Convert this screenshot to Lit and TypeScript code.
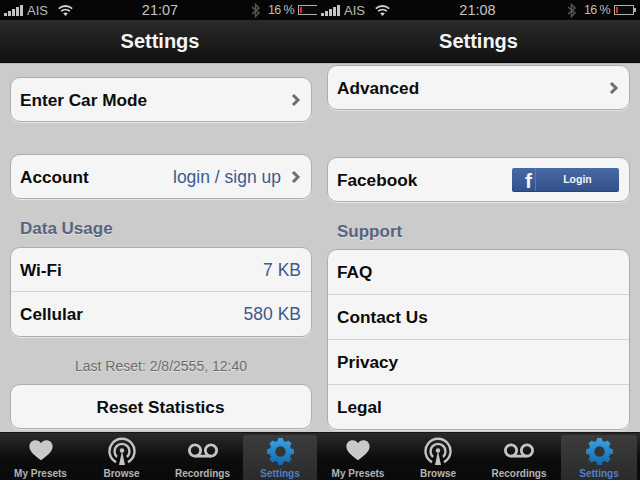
import { LitElement, html, css, svg } from "lit";
import { customElement, property } from "lit/decorators.js";

const chevron = html`<svg class="chev" width="10" height="14" viewBox="0 0 10 14"><path d="M2 2l5 5-5 5" fill="none" stroke="#6f6f6f" stroke-width="3"/></svg>`;

const heart = svg`<path d="M14 25C7 19 1.500 15 1.500 8.500 1.500 4 5 1.500 8 1.500c2.800 0 4.800 1.400 6 3.500 1.200-2.100 3.200-3.500 6-3.500 3 0 6.500 2.500 6.500 7 0 6.500-5.500 10.500-12.500 16.500z" fill="#c9c9c9"/>`;
const gearPath = "M11 0h6l1 4 3 1.300 3.600-2.100 4.200 4.200-2.100 3.600L28 14l4 1v6l-4 1-1.300 3 2.100 3.600-4.200 4.200-3.600-2.100L18 32l-1 4h-6l-1-4-3-1.300-3.600 2.100-4.200-4.200 2.100-3.600L0 22l-4-1v-6l4-1 1.300-3-2.100-3.600 4.200-4.200L7 5.300 10 4z";

@customElement("app-panel")
class AppPanel extends LitElement {
  @property() time = "";
  @property({ type: Boolean }) right = false;

  static styles = css`
    :host { display: flex; flex-direction: column; height: 480px; overflow: hidden; font-family: "Liberation Sans", Arial, sans-serif; }
    .status { height: 20px; flex: none; background: #060606; color: #bcbcbc; display: flex; align-items: center; font-size: 13px; padding: 0 0 0 4px; position: relative; }
    .status.r { padding-right: 4px; }
    .bars { display: flex; align-items: flex-end; gap: 1px; height: 11px; margin-right: 4px; }
    .bars i { width: 3px; background: #c4c4c4; display: block; }
    .wifi { margin-left: 10px; }
    .time { position: absolute; left: 3px; right: 0; text-align: center; font-size: 14.500px; color: #c4c4c4; }
    .status.r .time { left: 0; right: 2px; }
    .end { margin-left: auto; display: flex; align-items: center; gap: 4px; letter-spacing: -0.6px; font-size: 12.500px; }
    .bt { margin-right: 4px; }
    .nav { height: 43px; flex: none; border-top: 1px solid #2d2d2d; box-sizing: border-box; background: linear-gradient(#2a2a2a, #101010); border-bottom: 1px solid #0a0a0a; color: #f4f4f4; font-size: 20px; font-weight: 700; display: flex; align-items: center; justify-content: center; padding-left: 3px; }
    .r-nav { padding-left: 0; }
    .content { flex: 1; min-height: 0; overflow: hidden; background: #cbcbcb; padding: 13px 5px 0 10px; border-top: 1px solid #b5b5b5; }
    .content.r { padding: 1px 10px 0 10px; }
    .card { background: #f5f5f5; border: 1px solid #adadad; border-radius: 10px; box-shadow: 0 1px 0 #e6e6e6; overflow: hidden; box-sizing: border-box; }
    .row { height: 43px; display: flex; align-items: center; padding: 1px 10px 0 9px; font-size: 17.200px; font-weight: 700; color: #0c0c0c; box-sizing: border-box; }
    .row + .row { border-top: 1px solid #d4d4d4; height: 45px; }
    .row.tall { height: 44px; }
    .row.tall + .row.tall { height: 45px; }
    .val { margin-left: auto; font-weight: 400; font-size: 17.500px; color: #3d5a8c; }
    .chev { margin-left: 10px; flex: none; }
    .auto { margin-left: auto; }
    .label { font-size: 17px; font-weight: 700; color: #56647f; text-shadow: 0 1px 0 #e2e2e2; padding-left: 10px; line-height: 20px; }
    .center { justify-content: center; }
    .note { text-align: center; font-size: 14px; color: #6c6c6c; line-height: 16px; text-shadow: 0 1px 0 #e2e2e2; }
    .m1 { margin-top: 32px; }
    .m2 { margin-top: 20px; margin-bottom: 8px; }
    .m3 { margin-top: 20px; margin-bottom: 7px; }
    .m4 { margin-top: 21px; }
    .m5 { margin-top: 10px; }
    .m6 { margin-top: 47px; }
    .fb { margin-left: auto; width: 107px; height: 24px; border-radius: 2px; background: linear-gradient(#4a6aa5, #32508c); border-bottom: 1px solid #2b4474; box-sizing: border-box; display: flex; color: #f2f4f8; }
    .fb .f { width: 24px; border-right: 1px solid #5d7aad; box-sizing: border-box; font-size: 21px; text-align: right; padding: 2px 3px 0 0; line-height: 21px; }
    .fb .t { flex: 1; text-align: center; font-size: 10.500px; font-weight: 700; line-height: 23px; }
    .tabs { height: 48px; flex: none; background: linear-gradient(#2a2a2a, #0c0c0c 55%, #0a0a0a); border-top: 1px solid #161616; box-sizing: border-box; display: grid; grid-template-columns: 81px 81px 81px 74px; }
    .tabs.r { grid-template-columns: 82px 78px 84px 76px; padding-right: 3px; }
    .tab { display: flex; flex-direction: column; align-items: center; color: #b4b4b4; font-size: 10px; font-weight: 700; }
    .ic { height: 34px; display: flex; align-items: flex-end; justify-content: center; box-sizing: border-box; }
    .ic.heart { padding-bottom: 6px; }
    .ic.browse { padding-bottom: 2px; }
    .ic.rec { padding-bottom: 9px; }
    .tab.on { background: linear-gradient(#3c3c3c, #2a2a2a); border-radius: 3px 3px 0 0; margin-top: 2px; color: #4f7fc6; }
    .ic.gear { height: 32px; padding-bottom: 2px; }
    .tab span { line-height: 13px; }
  `;

  private statusBar() {
    const r = this.right;
    const h = [3, 5, 7, 9, 11];
    return html`<div class="status ${r ? "r" : ""}">
      <div class="bars">${h.map((n) => html`<i style="height:${n}px"></i>`)}</div>
      <span>AIS</span>
      <svg class="wifi" width="15" height="11" viewBox="0 0 15 11" fill="none" stroke="#cfcfcf" stroke-width="1.800">
        <path d="M0.800 3.600a10 10 0 0 1 13.400 0"/><path d="M3.150 6.200a6.500 6.500 0 0 1 8.700 0"/>
        <path d="M7.500 11L5.200 8.400a3.500 3.500 0 0 1 4.600 0z" fill="#cfcfcf" stroke="none"/>
      </svg>
      <div class="time">${this.time}</div>
      <div class="end">
        <svg class="bt" width="9" height="15" viewBox="0 0 9 15" fill="none" stroke="#555" stroke-width="1.500"><path d="M1 4l7 6-3.500 3.500v-12L8 5l-7 6"/></svg>
        <span>16 %</span>
        <svg width="${r ? 22 : 19}" height="10" viewBox="0 0 ${r ? 22 : 19} 10">
          <rect x="0.500" y="0.500" width="19" height="9" fill="#0a0a0a" stroke="#b0b0b0"/>
          <rect x="2" y="2" width="2" height="6" fill="#e0282a"/>
          ${r ? svg`<rect x="20" y="3" width="2" height="4" fill="#b0b0b0"/>` : ""}
        </svg>
      </div>
    </div>`;
  }

  private tabBar() {
    return html`<div class="tabs ${this.right ? "r" : ""}">
      <div class="tab"><div class="ic heart"><svg width="26" height="22" viewBox="0 0 28 26" preserveAspectRatio="none">${heart}</svg></div><span>My Presets</span></div>
      <div class="tab"><div class="ic browse"><svg width="28" height="28" viewBox="0 0 28 28" fill="none" stroke="#c4c4c4" stroke-width="2.400">
        <path d="M8 25.200a12.500 12.500 0 1 1 12 0"/><path d="M9 20a7.500 7.500 0 1 1 10 0"/>
        <circle cx="14" cy="13.500" r="2.200" fill="#c4c4c4" stroke="none"/><path d="M14 14l-3 14h6z" fill="#c4c4c4" stroke="none"/>
      </svg></div><span>Browse</span></div>
      <div class="tab"><div class="ic rec"><svg width="32" height="15" viewBox="0 0 33 16" fill="none" stroke="#c4c4c4" stroke-width="3">
        <circle cx="8" cy="8" r="6"/><circle cx="25" cy="8" r="6"/><path d="M8 14h17"/>
      </svg></div><span>Recordings</span></div>
      <div class="tab on"><div class="ic gear"><svg width="27" height="27" viewBox="-4 0 36 36">
        <defs><linearGradient id="g" x1="0" y1="0" x2="0" y2="1"><stop offset="0" stop-color="#3ea2e6"/><stop offset="1" stop-color="#1168ad"/></linearGradient></defs>
        <path fill-rule="evenodd" fill="url(#g)" d="${gearPath} M14 11a7 7 0 1 0 0.010 0z"/>
      </svg></div><span>Settings</span></div>
    </div>`;
  }

  render() {
    const r = this.right;
    return html`${this.statusBar()}
      <div class="nav ${r ? "r-nav" : ""}">Settings</div>
      <div class="content ${r ? "r" : ""}">
        ${r
          ? html`
              <div class="card"><div class="row">Advanced<span class="auto"></span>${chevron}</div></div>
              <div class="card m6"><div class="row">Facebook
                <div class="fb"><div class="f">f</div><div class="t">Login</div></div></div></div>
              <div class="label m3">Support</div>
              <div class="card">
                <div class="row tall">FAQ</div><div class="row tall">Contact Us</div>
                <div class="row tall">Privacy</div><div class="row tall">Legal</div>
              </div>`
          : html`
              <div class="card"><div class="row">Enter Car Mode<span class="auto"></span>${chevron}</div></div>
              <div class="card m1"><div class="row">Account<span class="val">login / sign up</span>${chevron}</div></div>
              <div class="label m2">Data Usage</div>
              <div class="card">
                <div class="row">Wi-Fi<span class="val">7 KB</span></div>
                <div class="row">Cellular<span class="val">580 KB</span></div>
              </div>
              <div class="note m4">Last Reset: 2/8/2555, 12:40</div>
              <div class="card m5"><div class="row center">Reset Statistics</div></div>`}
      </div>
      ${this.tabBar()}`;
  }
}

@customElement("app-root")
class AppRoot extends LitElement {
  static styles = css`
    :host { display: grid; grid-template-columns: 317px 323px; width: 640px; height: 480px; overflow: hidden; background: #000; }
  `;
  render() {
    return html`<app-panel time="21:07"></app-panel><app-panel time="21:08" right></app-panel>`;
  }
}
